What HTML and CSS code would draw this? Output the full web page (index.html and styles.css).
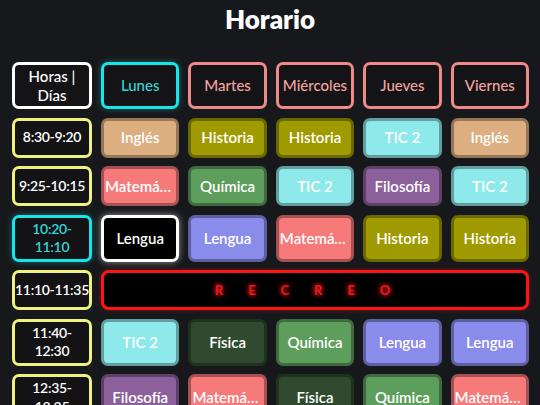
FILE: index.html
```html
<!DOCTYPE html>
<html lang="es">
<head>
<meta charset="utf-8">
<title>Horario</title>
<link rel="stylesheet" href="styles.css">
</head>
<body>
<h1 class="title">Horario</h1>
<div class="grid">
  <div class="cell head head-main">Horas |<br>Días</div>
  <div class="cell head head-today">Lunes</div>
  <div class="cell head">Martes</div>
  <div class="cell head">Miércoles</div>
  <div class="cell head">Jueves</div>
  <div class="cell head">Viernes</div>

  <div class="cell time">8:30-9:20</div>
  <div class="cell subj ingles">Inglés</div>
  <div class="cell subj historia">Historia</div>
  <div class="cell subj historia">Historia</div>
  <div class="cell subj tic">TIC 2</div>
  <div class="cell subj ingles">Inglés</div>

  <div class="cell time">9:25-10:15</div>
  <div class="cell subj mates"><span class="clip">Matemáticas</span></div>
  <div class="cell subj quimica">Química</div>
  <div class="cell subj tic">TIC 2</div>
  <div class="cell subj filo">Filosofía</div>
  <div class="cell subj tic">TIC 2</div>

  <div class="cell time time-now">10:20-<br>11:10</div>
  <div class="cell subj current">Lengua</div>
  <div class="cell subj lengua">Lengua</div>
  <div class="cell subj mates"><span class="clip">Matemáticas</span></div>
  <div class="cell subj historia">Historia</div>
  <div class="cell subj historia">Historia</div>

  <div class="cell time">11:10-11:35</div>
  <div class="cell recreo">RECREO</div>

  <div class="cell time">11:40-<br>12:30</div>
  <div class="cell subj tic">TIC 2</div>
  <div class="cell subj fisica">Física</div>
  <div class="cell subj quimica">Química</div>
  <div class="cell subj lengua">Lengua</div>
  <div class="cell subj lengua">Lengua</div>

  <div class="cell time">12:35-<br>13:25</div>
  <div class="cell subj filo">Filosofía</div>
  <div class="cell subj mates"><span class="clip">Matemáticas</span></div>
  <div class="cell subj fisica">Física</div>
  <div class="cell subj quimica">Química</div>
  <div class="cell subj mates"><span class="clip">Matemáticas</span></div>
</div>
</body>
</html>
```
FILE: styles.css
```css
html, body {
  margin: 0;
  padding: 0;
  background: #17181b;
  color: #ffffff;
  font-family: "Lato", "Noto Sans", sans-serif;
  overflow: hidden;
  height: 405px;
}

.title {
  margin: 0;
  padding-top: 4px;
  height: 58px;
  box-sizing: border-box;
  text-align: center;
  font-size: 26px;
  line-height: 30px;
  font-weight: 800;
  color: #ffffff;
}

.grid {
  display: grid;
  grid-template-columns: repeat(6, 1fr);
  column-gap: 9px;
  row-gap: 8.5px;
  padding: 4px 11px 0 12px;
}

.cell {
  box-sizing: border-box;
  min-height: 40px;
  border: 3px solid transparent;
  border-radius: 7px;
  padding: 2px 1px;
  display: flex;
  align-items: center;
  justify-content: center;
  text-align: center;
  font-size: 15px;
  line-height: 18.5px;
  font-weight: 600;
  white-space: nowrap;
  overflow: hidden;
}

.head {
  background: #141416;
  border-color: #ef8a88;
  color: #f3a4a1;
  font-weight: 500;
}

.head-main {
  border-color: #ffffff;
  color: #ffffff;
}

.head-today {
  border-color: #15e6ea;
  color: #33d4d8;
  box-shadow: 0 0 6px rgba(21, 230, 234, 0.35);
}

.time {
  background: #131315;
  border-color: #eef27e;
  color: #ffffff;
  font-size: 14px;
  letter-spacing: -0.3px;
  padding: 2px 0;
  overflow: visible;
}

.time-now {
  border-color: #15e6ea;
  color: #33d4d8;
  box-shadow: 0 0 6px rgba(21, 230, 234, 0.35);
}

.subj {
  border-color: rgba(0, 0, 0, 0.32);
  color: #ffffff;
}

.clip {
  display: block;
  overflow: hidden;
  text-overflow: ellipsis;
  max-width: 100%;
}

.ingles { background-color: #dcae80; }
.historia { background-color: #9f9a00; }
.tic { background-color: #8ee9ea; }
.mates { background-color: #f77a7a; }
.quimica { background-color: #5e9e5c; }
.filo { background-color: #8b609b; }
.lengua { background-color: #8a8cec; }
.fisica { background-color: #2f4a2f; }

.current {
  background: #000000;
  border-color: #ffffff;
  box-shadow: 0 0 7px rgba(255, 255, 255, 0.55);
}

.recreo {
  grid-column: 2 / 7;
  background: #000000;
  border-color: #ff1414;
  border-radius: 8px;
  box-shadow: 0 0 4px rgba(255, 20, 20, 0.4);
  color: #e81818;
  font-size: 13px;
  font-weight: 700;
  letter-spacing: 25px;
  text-shadow: 0 0 4px #ff2020, 0 0 8px rgba(255, 32, 32, 0.6);
}
```
